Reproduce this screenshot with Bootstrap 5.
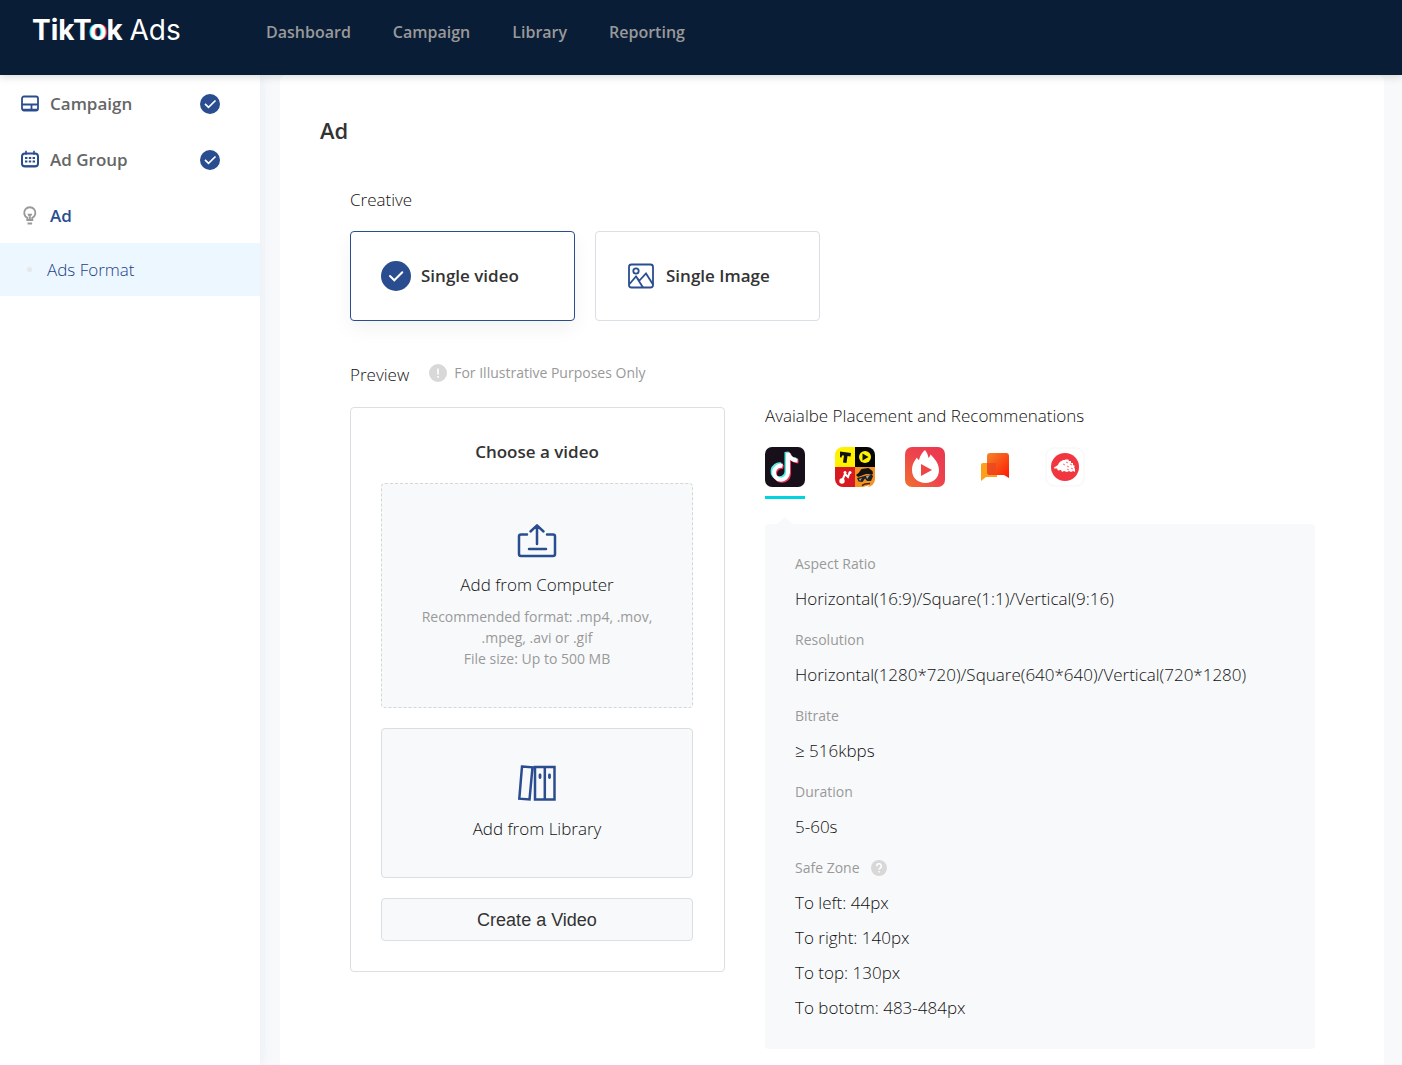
<!DOCTYPE html>
<html lang="en">
<head>
<meta charset="utf-8">
<meta name="viewport" content="width=device-width, initial-scale=1">
<title>TikTok Ads</title>
<link href="https://cdn.jsdelivr.net/npm/bootstrap@5.3.0/dist/css/bootstrap.min.css" rel="stylesheet">
<style>
body{font-family:"Open Sans","Noto Sans",sans-serif;font-size:17px;font-weight:300;line-height:28px;color:#111;background:#f8f9fb}
a{text-decoration:none}
.topbar{background:#0a1d37;height:75px;padding:0 32px;box-shadow:0 2px 8px rgba(0,0,0,.15);z-index:2}
.brand{font-family:Inter,sans-serif;font-size:28px;line-height:60px;font-weight:700;color:#fff;width:234px}
.brand .ads{font-weight:400}
.brand .ring{text-shadow:-1px 0 #25f4ee,1px 0 #fe2c55}
.topnav{gap:42px;line-height:64px;font-weight:600;font-size:16px}
.topnav a{color:#999}
.side{width:260px;background:#fff;box-shadow:2px 0 12px rgba(60,110,160,.08);z-index:1;min-height:calc(100vh - 75px)}
.side-item{height:56px;padding:1px 40px 0 20px;color:#666;font-weight:600;gap:10px}
.side-item.current{color:#2a4d8f}
.side-sub{height:53px;background:#edf7ff;color:#1d4189;padding:0 27px;gap:15px}
.side-sub .dot{width:5px;height:5px;border-radius:50%;background:#e6e8ea}
.work{padding:0 18px 0 20px}
.sheet{background:#fff;border-radius:6px 6px 0 0;padding:41px 69px 16px 40px;min-height:calc(100vh - 75px)}
h1{font-size:22px;line-height:28px;font-weight:600;color:#333;margin-bottom:42px}
.sheet-body{padding-left:30px}
.choices{gap:20px;margin:17px 0 40px}
.choice{width:225px;height:90px;border:1px solid #dadfe3;border-radius:4px;background:#fff;color:#333;font-weight:600;padding:0 30px;gap:10px;text-align:left}
.choice.on{border-color:#2a4d8f;box-shadow:0 8px 20px rgba(0,0,0,.05)}
.hint{font-size:14px;line-height:24px;font-weight:400;color:#999;gap:7px}
.preview-line{gap:20px;margin-bottom:18px}
.columns{gap:40px}
.picker{width:375px;flex:none;border:1px solid #dadfe3;border-radius:4px;padding:30px 31px 30px 30px;text-align:center}
.picker h2{font-size:17px;line-height:28px;font-weight:600;color:#333;margin-bottom:17px}
.tile{display:block;width:100%;background:#f8f9fb;border:1px solid #dadfe3;border-radius:4px;color:#111;font-weight:300;padding:35px 20px 34px;margin-bottom:20px}
.tile.drop{border-style:dashed;border-color:#d4d6d8;padding:36px 20px 38px}
.tile svg{display:block;margin:0 auto 11px}
.tile .note{display:block;font-size:14px;line-height:21px;font-weight:400;color:#999;margin-top:7px}
.make{display:block;width:100%;height:43px;background:#f8f9fb;border:1px solid #dadfe3;border-radius:4px;color:#333;font-family:"Liberation Sans",sans-serif;font-size:18px;font-weight:400}
.place h2{font-size:17px;line-height:18px;font-weight:300;margin-bottom:22px}
.apps{gap:30px;margin-bottom:25px}
.apps button{border:0;background:none;padding:0 0 9px;border-bottom:3px solid transparent;display:block}
.apps button.on{border-color:#00d5de}
.apps svg{display:block}
.spec{background:#f8f9fb;border-radius:4px;padding:23px 30px 24px;margin:0}
.spec::before{content:"";position:absolute;left:12px;top:-7px;border:8px solid transparent;border-top:0;border-bottom:7px solid #f8f9fb}
.spec dt{font-weight:400;font-size:14px;line-height:34px;color:#999;gap:11px}
.spec dd{margin:0;line-height:35px}
.spec dd + dt{margin-top:7px}
</style>
<script src="https://cdn.jsdelivr.net/npm/bootstrap@5.3.0/dist/js/bootstrap.bundle.min.js"></script>
</head>
<body>
<header class="topbar d-flex align-items-start position-relative">
  <a class="brand" href="#">TikT<span class="ring">o</span>k <span class="ads">Ads</span></a>
  <nav class="topnav d-flex"><a href="#">Dashboard</a><a href="#">Campaign</a><a href="#">Library</a><a href="#">Reporting</a></nav>
</header>
<div class="d-flex">
  <nav class="side flex-shrink-0 position-relative">
    <a class="side-item d-flex align-items-center" href="#">
      <svg width="20" height="20" viewBox="0 0 20 20" fill="none" stroke="#2a4d8f" stroke-width="1.800"><rect x="2" y="2.500" width="16" height="14" rx="2"/><path d="M2 10.500h16M11.500 11v5.500M2 15.700h16"/></svg>
      <span class="flex-grow-1">Campaign</span>
      <svg width="20" height="20" viewBox="0 0 20 20"><circle cx="10" cy="10" r="10" fill="#2a4d8f"/><path d="M5 9.800l3.500 3.500 7-6.800" fill="none" stroke="#fff" stroke-width="1.700"/></svg>
    </a>
    <a class="side-item d-flex align-items-center" href="#">
      <svg width="20" height="20" viewBox="0 0 20 20"><rect x="2" y="3.500" width="16" height="13" rx="3" fill="none" stroke="#2a4d8f" stroke-width="2"/><path d="M6 .8v4M14 .8v4M3 16h14" stroke="#2a4d8f" stroke-width="1.600"/><path d="M5 8h2.400m1.400 0h2.400m1.400 0h2.400M5 11.500h2.400m1.400 0h2.400m1.400 0h2.400" stroke="#2a4d8f" stroke-width="2.200"/></svg>
      <span class="flex-grow-1">Ad Group</span>
      <svg width="20" height="20" viewBox="0 0 20 20"><circle cx="10" cy="10" r="10" fill="#2a4d8f"/><path d="M5 9.800l3.500 3.500 7-6.800" fill="none" stroke="#fff" stroke-width="1.700"/></svg>
    </a>
    <a class="side-item current d-flex align-items-center" href="#">
      <svg width="20" height="20" viewBox="0 0 20 20" fill="none" stroke="#999" stroke-width="1.900"><path d="M7.300 14v-2.200a5.600 5.600 0 1 1 5 0V14z"/><path d="M7.500 17.500h4.600M9.800 11v3"/><path d="M7.300 7.800h5l-1.500 3h-2z" fill="#999" stroke="none"/></svg>
      <span>Ad</span>
    </a>
    <a class="side-sub d-flex align-items-center" href="#"><span class="dot"></span><span>Ads Format</span></a>
  </nav>
  <main class="work flex-grow-1">
    <div class="sheet">
      <h1>Ad</h1>
      <div class="sheet-body">
        <div>Creative</div>
        <div class="choices d-flex">
          <button type="button" class="choice on d-flex align-items-center">
            <svg width="30" height="30" viewBox="0 0 30 30"><circle cx="15" cy="15" r="15" fill="#2a4d8f"/><path d="M9 15l4.300 4.300 8-8" fill="none" stroke="#fff" stroke-width="2" stroke-linecap="round"/></svg>
            <span>Single video</span>
          </button>
          <button type="button" class="choice d-flex align-items-center">
            <svg width="30" height="30" viewBox="0 0 30 30" fill="none" stroke="#2a4d8f" stroke-width="1.800"><rect x="3" y="3.500" width="24" height="23" rx="2.500"/><circle cx="10" cy="10" r="2.700"/><path d="M3.500 23l6.500-7.500 3.500 4.500M11 17l6 9.500M13.500 19.500l6.500-7 7 11"/></svg>
            <span>Single Image</span>
          </button>
        </div>
        <div class="preview-line d-flex align-items-start">
          <span>Preview</span>
          <span class="hint d-flex align-items-center"><svg width="18" height="18" viewBox="0 0 18 18"><circle cx="9" cy="9" r="9" fill="#d8d8d8"/><path d="M9 4.500v6M9 12v1.800" stroke="#fff" stroke-width="1.600"/></svg>For Illustrative Purposes Only</span>
        </div>
        <div class="columns d-flex align-items-start">
          <section class="picker">
            <h2>Choose a video</h2>
            <button type="button" class="tile drop">
              <svg width="40" height="40" viewBox="0 0 40 40" fill="none" stroke="#2a4d8f" stroke-width="2.500" stroke-linecap="round" stroke-linejoin="round"><path d="M10 14.500h-6a2 2 0 0 0-2 2v17.500a2 2 0 0 0 2 2h32a2 2 0 0 0 2-2v-17.500a2 2 0 0 0-2-2h-6M20 24V5.500M13.500 11.500L20 5.300l6.500 6.200M12 29h17"/></svg>
              Add from Computer
              <span class="note">Recommended format: .mp4, .mov,<br>.mpeg, .avi or .gif<br>File size: Up to 500 MB</span>
            </button>
            <button type="button" class="tile">
              <svg width="40" height="40" viewBox="0 0 40 40" fill="none" stroke="#2a4d8f" stroke-width="2.500"><path d="M5 2.500l10.500.800L12.500 35.500 2.300 34.700zM18 3h19.500v32.500H18zM27.800 3v32.500"/><path d="M23 11v2.500M32.500 11v2.500" stroke-linecap="round" stroke-width="2.800"/></svg>
              Add from Library
            </button>
            <button type="button" class="make">Create a Video</button>
          </section>
          <section class="place flex-grow-1">
            <h2>Avaialbe Placement and Recommenations</h2>
            <div class="apps d-flex">
              <button type="button" class="on" aria-label="TikTok">
                <svg width="40" height="40" viewBox="0 0 40 40" fill="none"><rect width="40" height="40" rx="7" fill="#170f19"/><g stroke-width="4"><path stroke="#5be9e4" d="M16 17.500A7 7 0 1 0 21.500 24.500V5c1 4 4 7 9.500 7.500"/><path stroke="#f0365f" d="M18.500 20A7 7 0 1 0 24 27V7c1 4 4 7 9.500 7.500"/><path stroke="#fff" d="M17.500 18.800A7 7 0 1 0 23 25.800V6c1 4 4 7 9.500 7.500"/></g></svg>
              </button>
              <button type="button" aria-label="News feed apps">
                <svg width="40" height="40" viewBox="0 0 40 40"><defs><clipPath id="quad"><rect width="40" height="40" rx="8"/></clipPath></defs><g clip-path="url(#quad)"><path fill="#fff200" d="M0 0h20v20H0z"/><path fill="#050505" d="M20 0h20v20H20z"/><path fill="#d91920" d="M0 20h20v20H0z"/><path fill="#f39324" d="M20 20h20v20H20z"/><path d="M5 4.500l11 1.500-.5 3.500-3-.4-1 6.900-3.500-.5 1-6.900-2-.2-.5 2-1.500-.2z" fill="#111"/><circle cx="30" cy="10" r="6" fill="#fff200"/><path d="M27.500 6.500l6 3.500-6 3.500z" fill="#111"/><path d="M7 34l3-7 3 3 1.500-4" stroke="#fff" stroke-width="2" fill="none"/><circle cx="7" cy="34" r="2.700" fill="#fff"/><circle cx="10" cy="25.500" r="1.500" fill="#fff"/><circle cx="15" cy="25.500" r="1.500" fill="#fff"/><path d="M21 28l2.500-2 3-4 7-1 4 3 .5 3-7 0-8 3z" fill="#171310"/><path d="M22 31l15-4 1 2.500-2 4.500-4 0-2-2.500-2.500 3.500-4-.5z" fill="#222"/><path d="M31 29l4-1-3 4zM24 32l3-1-2 3z" fill="#aaa"/><path d="M27 38.500l3-1.500 5-.5" stroke="#4b2613" stroke-width="1.500" fill="none"/><path d="M28 40l7-2-2 2z" fill="#fff"/></g></svg>
              </button>
              <button type="button" aria-label="Vigo Video">
                <svg width="40" height="40" viewBox="0 0 40 40"><defs><linearGradient id="fire" x1="0" y1="1" x2="1" y2="0"><stop stop-color="#f0722f"/><stop offset=".5" stop-color="#ee444c"/><stop offset="1" stop-color="#ea3650"/></linearGradient></defs><rect width="40" height="40" rx="7" fill="url(#fire)"/><path d="M20 3c2 2.500 3 5 3.500 8 1-1 1.500-2 2-3.500 4 4 8.500 9 8.500 15.500C34 31 28 36 20.500 36S7 31 7 23c0-6 3-10 5-12.500.5 1.500 1 2 2 2.500 1-4 3-7.500 6-10z" fill="#fff"/><path d="M16 17v12l11-6z" fill="#ee4545"/></svg>
              </button>
              <button type="button" aria-label="Helo">
                <svg width="40" height="40" viewBox="0 0 40 40"><defs><linearGradient id="talk" x2="1" y2="1"><stop stop-color="#f4872a"/><stop offset="1" stop-color="#ff1602"/></linearGradient></defs><path d="M8 16h14v14H11l-5 4V18q0-2 2-2z" fill="#fca01c"/><path d="M15 6h16q3 0 3 3v22l-5-3H15q-3 0-3-3V9q0-3 3-3z" fill="url(#talk)"/><path d="M12 16h9v12h-6q-3 0-3-3z" fill="#eb4620" opacity=".75"/></svg>
              </button>
              <button type="button" aria-label="TopBuzz">
                <svg width="40" height="40" viewBox="0 0 40 40"><rect x="1" y="1" width="38" height="38" rx="8" fill="#fff" stroke="#f5f5f5"/><circle cx="20" cy="20" r="14" fill="#f2363f"/><path d="M9 20.500l4-2.500c1-3 4-5.500 7-5l1-1 1 1 1-1 1 2h2l0 2 2 0 0 2 2 1-1 1 1 2 0 3-2-1-2 1-2-1-2 1-3-1-2 1-1-2-3 .5-1-2-3 0z" fill="#fff"/><path d="M18 17l2 1m1-3l2 1m-1 3l2 1m1-3l2 1m-5 4l2 1m2-2l2 1" stroke="#f2363f" stroke-width=".7"/></svg>
              </button>
            </div>
            <dl class="spec position-relative">
              <dt>Aspect Ratio</dt><dd>Horizontal(16:9)/Square(1:1)/Vertical(9:16)</dd>
              <dt>Resolution</dt><dd>Horizontal(1280*720)/Square(640*640)/Vertical(720*1280)</dd>
              <dt>Bitrate</dt><dd>≥ 516kbps</dd>
              <dt>Duration</dt><dd>5-60s</dd>
              <dt class="d-flex align-items-center">Safe Zone <svg width="16" height="16" viewBox="0 0 16 16"><circle cx="8" cy="8" r="8" fill="#d8d8d8"/><path d="M5.700 6.200a2.300 2.300 0 1 1 3.300 2c-.7.400-1 .8-1 1.500M8 11v1.600" stroke="#fff" stroke-width="1.500" fill="none"/></svg></dt>
              <dd>To left: 44px</dd><dd>To right: 140px</dd><dd>To top: 130px</dd><dd>To bototm: 483-484px</dd>
            </dl>
          </section>
        </div>
      </div>
    </div>
  </main>
</div>
</body>
</html>
